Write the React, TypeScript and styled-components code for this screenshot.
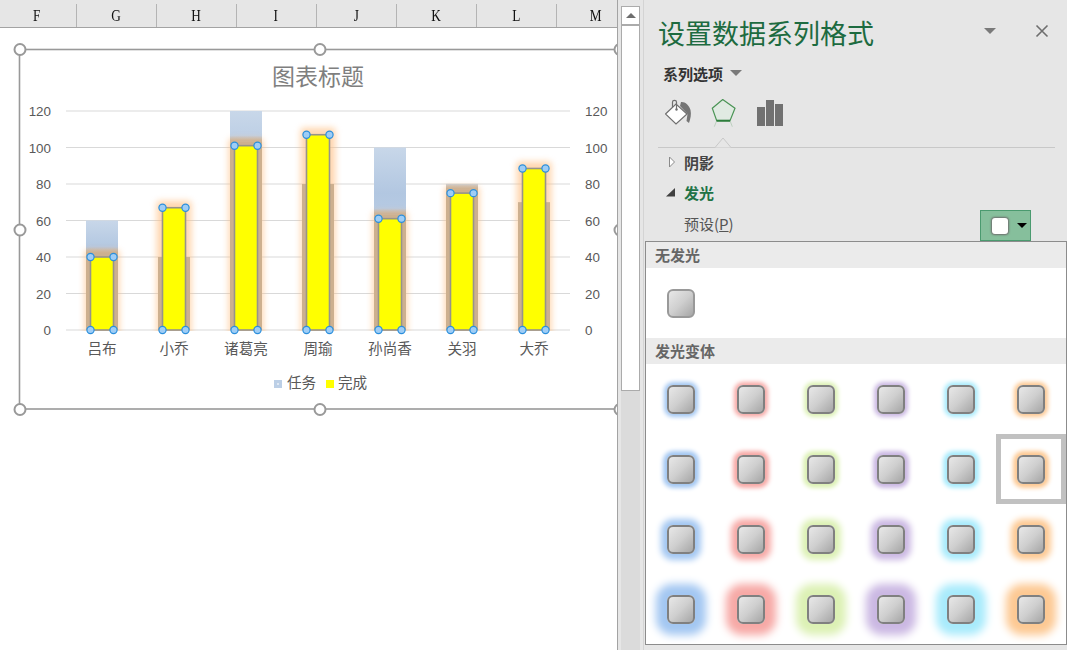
import React from "react";
import styled, { createGlobalStyle } from "styled-components";

const CJK = `"Noto Sans CJK SC", "Liberation Sans", sans-serif`;

const COLUMNS = [
  { name: "F", width: 77 },
  { name: "G", width: 80 },
  { name: "H", width: 80 },
  { name: "I", width: 80 },
  { name: "J", width: 80 },
  { name: "K", width: 80 },
  { name: "L", width: 80 },
  { name: "M", width: 80 },
];

const SERIES = [
  { name: "吕布", task: 60, done: 40 },
  { name: "小乔", task: 40, done: 67 },
  { name: "诸葛亮", task: 120, done: 101 },
  { name: "周瑜", task: 80, done: 107 },
  { name: "孙尚香", task: 100, done: 61 },
  { name: "关羽", task: 80, done: 75 },
  { name: "大乔", task: 70, done: 88.5 },
];

const TICKS = [0, 20, 40, 60, 80, 100, 120];
const GLOWS = ["#a3c7f2", "#f7a9a6", "#dcf1b4", "#cbb8e3", "#a8ebfc", "#fdc993"];
const GLOW_ROWS = [
  { spread: 3, blur: 4 },
  { spread: 4, blur: 4 },
  { spread: 6, blur: 6 },
  { spread: 11, blur: 9 },
];

const yOf = (value: number) => 330 - value * 1.825;
const xOf = (index: number) => 102 + index * 72;

const GlobalStyle = createGlobalStyle`
  html, body {
    margin: 0;
    padding: 0;
    background: #e6e6e6;
    overflow: hidden;
  }
`;

const Screen = styled.div`
  display: flex;
  width: 1067px;
  height: 650px;
  overflow: hidden;
  background: #e6e6e6;
  font-family: ${CJK};
`;

const Sheet = styled.div`
  position: relative;
  display: flex;
  flex-direction: column;
  width: 618px;
  height: 650px;
  flex-shrink: 0;
  overflow: hidden;
  border-right: 1px solid #a3a3a3;
  box-sizing: border-box;
`;

const ColumnHeader = styled.div`
  display: flex;
  height: 28px;
  flex-shrink: 0;
  box-sizing: border-box;
  padding-top: 4px;
  border-bottom: 1px solid #a3a3a3;
  background: #e6e6e6;
`;

const ColumnCell = styled.div<{ $width: number; $first?: boolean }>`
  width: ${(p) => p.$width}px;
  box-sizing: border-box;
  flex-shrink: 0;
  display: flex;
  align-items: center;
  justify-content: center;
  padding-right: ${(p) => (p.$first ? 3 : 1)}px;
  border-right: 1px solid #b4b4b4;
  font-family: "Liberation Serif", serif;
  font-size: 17px;
  line-height: 23px;
  color: #111;
`;

const ColumnLetter = styled.span`
  display: inline-block;
  transform: scaleX(0.78);
`;

const Cells = styled.div`
  flex: 1;
  background: #fff;
`;

const ChartLayer = styled.svg`
  position: absolute;
  left: 0;
  top: 28px;
`;

const ScrollGutter = styled.div`
  display: flex;
  flex-direction: column;
  width: 26px;
  height: 650px;
  flex-shrink: 0;
  box-sizing: border-box;
  padding: 6px 3px 0 3px;
  border-right: 1px solid #d4d4d4;
`;

const ScrollButton = styled.div`
  height: 19px;
  flex-shrink: 0;
  box-sizing: border-box;
  background: #fff;
  border: 1px solid #ababab;
  display: flex;
  align-items: center;
  justify-content: center;
`;

const ScrollThumb = styled.div`
  height: 366px;
  flex-shrink: 0;
  box-sizing: border-box;
  background: #fff;
  border: 1px solid #ababab;
`;

const ScrollTrack = styled.div`
  flex: 1;
  background: #dbdbdb;
`;

const UpArrow = styled.div`
  width: 0;
  height: 0;
  border-left: 5px solid transparent;
  border-right: 5px solid transparent;
  border-bottom: 5px solid #6e6e6e;
`;

const Panel = styled.div`
  position: relative;
  flex: 1;
  height: 650px;
  box-sizing: border-box;
  padding-left: 14px;
  display: flex;
  flex-direction: column;
`;

const TitleRow = styled.div`
  display: flex;
  align-items: center;
  height: 61px;
  padding-top: 5px;
  box-sizing: border-box;
  flex-shrink: 0;
`;

const PanelTitle = styled.div`
  width: 216px;
  font-size: 27px;
  line-height: 36px;
  color: #1d6b40;
  white-space: nowrap;
`;

const Caret = styled.div<{ $color?: string; $size?: number }>`
  width: 0;
  height: 0;
  border-left: ${(p) => p.$size ?? 6}px solid transparent;
  border-right: ${(p) => p.$size ?? 6}px solid transparent;
  border-top: ${(p) => p.$size ?? 6}px solid ${(p) => p.$color ?? "#7a7a7a"};
`;

const TitleCaret = styled.div`
  margin-left: 110px;
  margin-top: -4px;
`;

const CloseButton = styled.div`
  display: flex;
  margin-left: 39px;
  margin-top: -4px;
  width: 14px;
  height: 14px;
`;

const SeriesRow = styled.div`
  display: flex;
  align-items: center;
  gap: 7px;
  height: 24px;
  padding-left: 5px;
  flex-shrink: 0;
  font-size: 15px;
  font-weight: 700;
  color: #333;
`;

const TabIcons = styled.div`
  display: flex;
  align-items: flex-start;
  height: 63px;
  margin-bottom: -1px;
  padding-top: 14px;
  box-sizing: border-box;
  padding-left: 7px;
  gap: 18px;
  flex-shrink: 0;
  border-bottom: 1px solid #c8c8c8;
  width: 397px;
  position: relative;
`;

const Notch = styled.svg`
  position: absolute;
  left: 56px;
  bottom: -1px;
`;

const Section = styled.div<{ $active?: boolean }>`
  display: flex;
  align-items: center;
  height: 30px;
  flex-shrink: 0;
  font-size: 15px;
  font-weight: 700;
  color: ${(p) => (p.$active ? "#217346" : "#444")};
`;

const SectionArrow = styled.svg`
  width: 26px;
  height: 12px;
  flex-shrink: 0;
`;

const PresetRow = styled.div`
  display: flex;
  align-items: center;
  height: 33px;
  padding-left: 26px;
  flex-shrink: 0;
  width: 373px;
  box-sizing: border-box;
  justify-content: space-between;
  font-size: 15px;
  color: #555;
`;

const Underlined = styled.span`
  text-decoration: underline;
`;

const PresetButton = styled.div`
  width: 51px;
  height: 31px;
  margin-top: 4px;
  box-sizing: border-box;
  display: flex;
  align-items: center;
  gap: 9px;
  padding-left: 11px;
  background: #86bf9c;
  border: 1px solid #4a9a6f;
`;

const PresetSwatch = styled.div`
  width: 16px;
  height: 16px;
  border-radius: 3px;
  background: #fff;
  box-shadow: 0 0 2px 1px #6d6d6d;
`;

const Menu = styled.div`
  position: absolute;
  left: 1px;
  top: 241px;
  width: 422px;
  height: 404px;
  box-sizing: border-box;
  background: #fff;
  border: 1px solid #8c8c8c;
  display: flex;
  flex-direction: column;
`;

const MenuHeading = styled.div`
  height: 26px;
  flex-shrink: 0;
  display: flex;
  align-items: center;
  padding: 0 0 2px 9px;
  box-sizing: border-box;
  background: #ebebeb;
  font-size: 15px;
  font-weight: 700;
  color: #666;
`;

const SwatchGrid = styled.div`
  display: grid;
  grid-template-columns: repeat(6, 70px);
  grid-auto-rows: 70px;
`;

const SwatchCell = styled.div<{ $selected?: boolean }>`
  display: flex;
  align-items: center;
  justify-content: center;
  box-sizing: border-box;
  border: ${(p) => (p.$selected ? "5px solid #c1c1c1" : "none")};
`;

const Swatch = styled.div<{ $glow?: string; $spread?: number; $blur?: number }>`
  width: 28px;
  height: 29px;
  box-sizing: border-box;
  border-radius: 6px;
  border: 2px solid ${(p) => (p.$glow ? "#808080" : "#999")};
  background: linear-gradient(135deg, #e8e8e8 0%, #cfcfcf 50%, #a6a6a6 100%);
  box-shadow: ${(p) => (p.$glow ? `0 0 ${p.$blur}px ${p.$spread}px ${p.$glow}` : "none")};
`;

const ChartText = styled.text<{ $size: number; $fill: string }>`
  font-family: ${CJK};
  font-size: ${(p) => p.$size}px;
  fill: ${(p) => p.$fill};
`;

const AxisText = styled.text`
  font-family: "Liberation Sans", sans-serif;
  font-size: 13.4px;
  fill: #595959;
`;

function Handle({ cx, cy }: { cx: number; cy: number }) {
  return <circle cx={cx} cy={cy} r={5.5} fill="#fff" stroke="#999" strokeWidth={2} />;
}

function BarGrip({ cx, cy }: { cx: number; cy: number }) {
  return <circle cx={cx} cy={cy} r={3.6} fill="#9fcdf5" stroke="#2b8fdc" strokeWidth={1.2} />;
}

function Chart() {
  return (
    <ChartLayer width={617} height={622} viewBox="0 28 617 622">
      <defs>
        <linearGradient id="taskFill" x1="0" y1="0" x2="0" y2="1">
          <stop offset="0" stopColor="#c8d7e9" />
          <stop offset="0.25" stopColor="#b2c7e1" />
          <stop offset="1" stopColor="#d4e0ee" />
        </linearGradient>
        <linearGradient id="tanFade" x1="0" y1="0" x2="0" y2="1">
          <stop offset="0" stopColor="#cdb08f" stopOpacity="0" />
          <stop offset="1" stopColor="#cdb08f" />
        </linearGradient>
        <filter id="barGlow" x="-80%" y="-30%" width="260%" height="160%">
          <feGaussianBlur stdDeviation="3.2" />
        </filter>
        <clipPath id="plotClip">
          <rect x={0} y={28} width={617} height={303} />
        </clipPath>
      </defs>

      <ChartText $size={23} $fill="#7f7f7f" x={318} y={85} textAnchor="middle">
        图表标题
      </ChartText>

      {TICKS.map((tick) => (
        <g key={tick}>
          <line x1={66} x2={570} y1={yOf(tick)} y2={yOf(tick)} stroke="#d9d9d9" strokeWidth={1} />
          <AxisText x={51} y={yOf(tick) + 5} textAnchor="end">
            {tick}
          </AxisText>
          <AxisText x={585} y={yOf(tick) + 5}>
            {tick}
          </AxisText>
        </g>
      ))}

      {SERIES.map((item, i) => {
        const left = xOf(i) - 16;
        const tanTop = Math.max(yOf(item.task), yOf(item.done) - 4);
        return (
          <g key={item.name}>
            <rect x={left} y={yOf(item.task)} width={32} height={330 - yOf(item.task)} fill="url(#taskFill)" />
            <g clipPath="url(#plotClip)">
              <rect
                x={xOf(i) - 17.5}
                y={yOf(item.done) - 7}
                width={35}
                height={330 - yOf(item.done) + 14}
                rx={3}
                fill="#ffbe80"
                opacity={0.62}
                filter="url(#barGlow)"
              />
            </g>
            {item.done < item.task && (
              <rect x={left} y={tanTop - 6} width={32} height={6} fill="url(#tanFade)" />
            )}
            <rect x={left} y={tanTop} width={32} height={330 - tanTop} fill="#cdb08f" />
            <rect
              x={xOf(i) - 11.5}
              y={yOf(item.done)}
              width={23}
              height={330 - yOf(item.done)}
              fill="#ffff00"
              stroke="#97938a"
              strokeWidth={1.6}
            />
            <BarGrip cx={xOf(i) - 11.5} cy={yOf(item.done)} />
            <BarGrip cx={xOf(i) + 11.5} cy={yOf(item.done)} />
            <BarGrip cx={xOf(i) - 11.5} cy={330} />
            <BarGrip cx={xOf(i) + 11.5} cy={330} />
            <ChartText $size={14.6} $fill="#595959" x={xOf(i)} y={354} textAnchor="middle">
              {item.name}
            </ChartText>
          </g>
        );
      })}

      <rect x={274} y={380} width={8} height={8} fill="#bccfe6" />
      <rect x={277} y={383} width={2} height={2} fill="#dfe8f3" />
      <ChartText $size={14.6} $fill="#595959" x={287} y={388}>
        任务
      </ChartText>
      <rect x={326} y={380} width={8} height={8} fill="#ffff00" />
      <ChartText $size={14.6} $fill="#595959" x={338} y={388}>
        完成
      </ChartText>

      <rect x={19.5} y={49.5} width={620} height={359.5} fill="none" stroke="#999" strokeWidth={1.6} />
      <Handle cx={20} cy={49.5} />
      <Handle cx={320} cy={49.5} />
      <Handle cx={620} cy={49.5} />
      <Handle cx={20} cy={230} />
      <Handle cx={620} cy={230} />
      <Handle cx={20} cy={409.5} />
      <Handle cx={320} cy={409.5} />
      <Handle cx={620} cy={409.5} />
    </ChartLayer>
  );
}

function BucketIcon() {
  return (
    <svg width="28" height="28" viewBox="0 0 28 28">
      <path d="M16 3 C20 2.5 24 6 25.5 11 C26.5 15 25.5 20 24 24 L21.5 22 L22.5 15 L15 7 Z" fill="#757575" />
      <path d="M0.5 15 L11 5 L22 15 L11 25 Z" fill="#fff" stroke="#6f6f6f" strokeWidth="1.2" />
      <path d="M7.5 8 L7.5 3 C7.5 0.8 11.5 0.8 11.5 3 L11.5 10.5" fill="none" stroke="#6f6f6f" strokeWidth="1.2" />
      <circle cx="11.5" cy="10.5" r="1.2" fill="#6f6f6f" />
    </svg>
  );
}

function PentagonIcon() {
  return (
    <svg width="28" height="28" viewBox="0 0 28 28">
      <path d="M5.7 21.7 L3.3 27.7" fill="none" stroke="#bcd0bf" strokeWidth="1" />
      <path d="M19 21.7 L21.3 27.7" fill="none" stroke="#bcd0bf" strokeWidth="1" />
      <path d="M11.7 0.5 L24 9.3 L19 21.7 L5.7 21.7 L1.3 9.3 Z" fill="#e0eae2" stroke="#4a9455" strokeWidth="1.2" />
      <path d="M5.7 21.7 L19 21.7" stroke="#2d7d3c" strokeWidth="2" />
    </svg>
  );
}

function BarsIcon() {
  return (
    <svg width="27" height="28" viewBox="0 0 27 28">
      <rect x="0" y="8" width="8" height="19" fill="#717171" />
      <rect x="9" y="1" width="8" height="26" fill="#717171" />
      <rect x="18" y="5" width="8" height="22" fill="#717171" />
    </svg>
  );
}

function App() {
  return (
    <Screen>
      <GlobalStyle />
      <Sheet>
        <ColumnHeader>
          {COLUMNS.map((col, i) => (
            <ColumnCell key={col.name} $width={col.width} $first={i === 0}>
              <ColumnLetter>{col.name}</ColumnLetter>
            </ColumnCell>
          ))}
        </ColumnHeader>
        <Cells />
        <Chart />
      </Sheet>

      <ScrollGutter>
        <ScrollButton>
          <UpArrow />
        </ScrollButton>
        <ScrollThumb />
        <ScrollTrack />
      </ScrollGutter>

      <Panel>
        <TitleRow>
          <PanelTitle>设置数据系列格式</PanelTitle>
          <TitleCaret>
            <Caret />
          </TitleCaret>
          <CloseButton>
            <svg width="14" height="14" viewBox="0 0 14 14">
              <path d="M1.5 1.5 L12.5 12.5 M12.5 1.5 L1.5 12.5" stroke="#6e6e6e" strokeWidth="1.6" />
            </svg>
          </CloseButton>
        </TitleRow>

        <SeriesRow>
          系列选项
          <Caret />
        </SeriesRow>

        <TabIcons>
          <BucketIcon />
          <PentagonIcon />
          <BarsIcon />
          <Notch width="18" height="11" viewBox="0 0 18 11">
            <path d="M0 10.5 L1 10.5 L9 1 L17 10.5 L18 10.5" fill="#e6e6e6" stroke="#c8c8c8" strokeWidth="1" />
          </Notch>
        </TabIcons>

        <Section>
          <SectionArrow viewBox="0 0 26 12">
            <path d="M11.5 1 L16.5 6 L11.5 11 Z" fill="#fff" stroke="#8a8a8a" strokeWidth="1" />
          </SectionArrow>
          阴影
        </Section>
        <Section $active>
          <SectionArrow viewBox="0 0 26 12">
            <path d="M8 10.5 L17 10.5 L17 2 Z" fill="#404040" />
          </SectionArrow>
          发光
        </Section>
        <PresetRow>
          <span>
            预设(<Underlined>P</Underlined>)
          </span>
          <PresetButton>
            <PresetSwatch />
            <Caret $color="#000" $size={5} />
          </PresetButton>
        </PresetRow>

        <Menu>
          <MenuHeading>无发光</MenuHeading>
          <SwatchGrid>
            <SwatchCell>
              <Swatch />
            </SwatchCell>
          </SwatchGrid>
          <MenuHeading>发光变体</MenuHeading>
          <SwatchGrid>
            {GLOW_ROWS.map((row, r) =>
              GLOWS.map((glow, c) => (
                <SwatchCell key={`${r}-${c}`} $selected={r === 1 && c === 5}>
                  <Swatch $glow={glow} $spread={row.spread} $blur={row.blur} />
                </SwatchCell>
              )),
            )}
          </SwatchGrid>
        </Menu>
      </Panel>
    </Screen>
  );
}

export default App;
